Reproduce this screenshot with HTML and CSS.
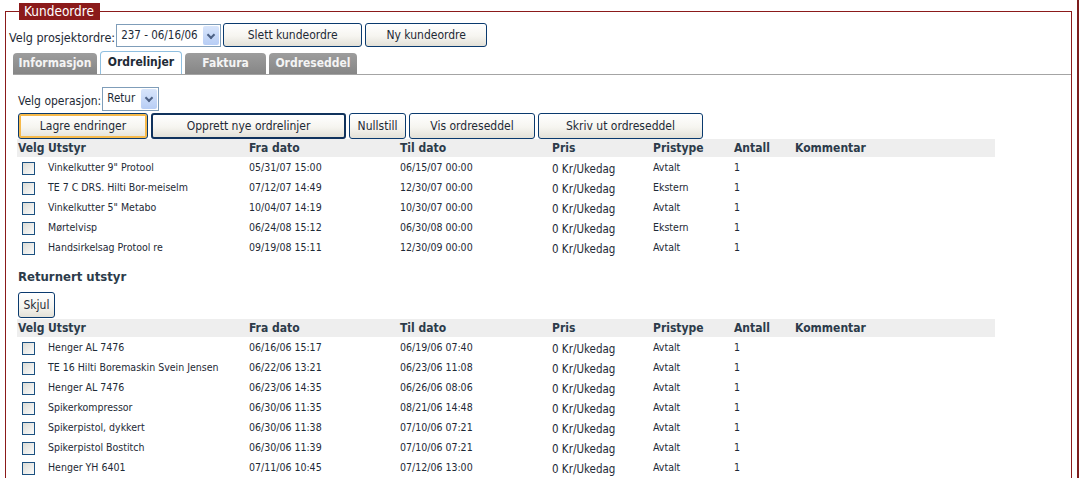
FILE: index.html
```html
<!DOCTYPE html>
<html lang="no">
  <head>
    <meta charset="UTF-8" />
    <title>Kundeordre</title>
    <link rel="stylesheet" href="styles.css">
  </head>
  <body>
    <div class="page">
      <fieldset class="box">
        <legend class="box-title">Kundeordre</legend>

        <div class="bar top-bar">
          <span class="label lbl-order">Velg prosjektordre:</span>
          <span class="select sel-order"><span class="sel-text">237 - 06/16/06</span><span class="sel-arrow"></span></span>
          <button class="btn w-slett">Slett kundeordre</button>
          <button class="btn w-ny">Ny kundeordre</button>
        </div>

        <div class="tabs">
          <div class="tab t-info">Informasjon</div>
          <div class="tab active t-ordre">Ordrelinjer</div>
          <div class="tab t-faktura">Faktura</div>
          <div class="tab t-seddel">Ordreseddel</div>
        </div>

        <div class="panel">
          <div class="bar op-bar">
            <span class="label">Velg operasjon:</span>
            <span class="select sel-op"><span class="sel-text">Retur</span><span class="sel-arrow"></span></span>
          </div>
          <div class="bar btn-bar">
            <button class="btn hover w-lagre">Lagre endringer</button>
            <button class="btn default w-opprett">Opprett nye ordrelinjer</button>
            <button class="btn w-null">Nullstill</button>
            <button class="btn w-vis">Vis ordreseddel</button>
            <button class="btn w-skriv">Skriv ut ordreseddel</button>
          </div>

          <table class="grid">
            <thead>
              <tr>
                <th class="c-velg">Velg</th><th class="c-utstyr">Utstyr</th><th class="c-fra">Fra dato</th><th class="c-til">Til dato</th><th class="c-pris">Pris</th><th class="c-type">Pristype</th><th class="c-antall">Antall</th><th>Kommentar</th>
              </tr>
            </thead>
            <tbody>
              <tr><td><span class="check"></span></td><td>Vinkelkutter 9" Protool</td><td>05/31/07 15:00</td><td>06/15/07 00:00</td><td class="pris">0 Kr/Ukedag</td><td>Avtalt</td><td>1</td><td></td></tr>
              <tr><td><span class="check"></span></td><td>TE 7 C DRS. Hilti Bor-meiselm</td><td>07/12/07 14:49</td><td>12/30/07 00:00</td><td class="pris">0 Kr/Ukedag</td><td>Ekstern</td><td>1</td><td></td></tr>
              <tr><td><span class="check"></span></td><td>Vinkelkutter 5" Metabo</td><td>10/04/07 14:19</td><td>10/30/07 00:00</td><td class="pris">0 Kr/Ukedag</td><td>Avtalt</td><td>1</td><td></td></tr>
              <tr><td><span class="check"></span></td><td>Mørtelvisp</td><td>06/24/08 15:12</td><td>06/30/08 00:00</td><td class="pris">0 Kr/Ukedag</td><td>Ekstern</td><td>1</td><td></td></tr>
              <tr><td><span class="check"></span></td><td>Handsirkelsag Protool re</td><td>09/19/08 15:11</td><td>12/30/09 00:00</td><td class="pris">0 Kr/Ukedag</td><td>Avtalt</td><td>1</td><td></td></tr>
            </tbody>
          </table>

          <h3 class="sub-title">Returnert utstyr</h3>
          <button class="btn w-skjul">Skjul</button>

          <table class="grid">
            <thead>
              <tr>
                <th class="c-velg">Velg</th><th class="c-utstyr">Utstyr</th><th class="c-fra">Fra dato</th><th class="c-til">Til dato</th><th class="c-pris">Pris</th><th class="c-type">Pristype</th><th class="c-antall">Antall</th><th>Kommentar</th>
              </tr>
            </thead>
            <tbody>
              <tr><td><span class="check"></span></td><td>Henger AL 7476</td><td>06/16/06 15:17</td><td>06/19/06 07:40</td><td class="pris">0 Kr/Ukedag</td><td>Avtalt</td><td>1</td><td></td></tr>
              <tr><td><span class="check"></span></td><td>TE 16 Hilti Boremaskin Svein Jensen</td><td>06/22/06 13:21</td><td>06/23/06 11:08</td><td class="pris">0 Kr/Ukedag</td><td>Avtalt</td><td>1</td><td></td></tr>
              <tr><td><span class="check"></span></td><td>Henger AL 7476</td><td>06/23/06 14:35</td><td>06/26/06 08:06</td><td class="pris">0 Kr/Ukedag</td><td>Avtalt</td><td>1</td><td></td></tr>
              <tr><td><span class="check"></span></td><td>Spikerkompressor</td><td>06/30/06 11:35</td><td>08/21/06 14:48</td><td class="pris">0 Kr/Ukedag</td><td>Avtalt</td><td>1</td><td></td></tr>
              <tr><td><span class="check"></span></td><td>Spikerpistol, dykkert</td><td>06/30/06 11:38</td><td>07/10/06 07:21</td><td class="pris">0 Kr/Ukedag</td><td>Avtalt</td><td>1</td><td></td></tr>
              <tr><td><span class="check"></span></td><td>Spikerpistol Bostitch</td><td>06/30/06 11:39</td><td>07/10/06 07:21</td><td class="pris">0 Kr/Ukedag</td><td>Avtalt</td><td>1</td><td></td></tr>
              <tr><td><span class="check"></span></td><td>Henger YH 6401</td><td>07/11/06 10:45</td><td>07/12/06 13:00</td><td class="pris">0 Kr/Ukedag</td><td>Avtalt</td><td>1</td><td></td></tr>
            </tbody>
          </table>
        </div>
      </fieldset>
    </div>
  </body>
</html>
```

FILE: styles.css
```css
* {
  margin: 0;
  padding: 0;
  box-sizing: border-box;
}
body {
  font-family: "DejaVu Sans Condensed", "DejaVu Sans", sans-serif;
  font-size: 11.5px;
  color: #1e2a36;
  background: #fff;
  overflow: hidden;
}
.page {
  width: 1079px;
  height: 478px;
  padding: 3px 5px 0 5px;
  border-right: 2px solid #7d1d1d;
  overflow: hidden;
}
.box {
  width: 1066px;
  border: 1px solid #8b1a1a;
  padding: 0 0 0 3px;
  height: 520px;
}
.box-title {
  margin-left: 10px;
  background: #8b1a1a;
  color: #fff;
  font-size: 13.5px;
  line-height: 17px;
  padding: 0 6px 0 5px;
}

/* toolbars */
.bar {
  display: flex;
  align-items: flex-end;
}
.top-bar {
  margin-top: 1px;
  height: 26px;
}
.label {
  font-size: 12px;
  padding-bottom: 2px;
  white-space: nowrap;
}
.lbl-order {
  font-size: 12.5px;
}
.select {
  display: flex;
  align-items: stretch;
  border: 1px solid #7f9db9;
  background: #fff;
  height: 23px;
  padding: 1px;
}
.sel-text {
  flex: 1;
  font-size: 11.5px;
  line-height: 19px;
  padding: 0 2px 0 3px;
  white-space: nowrap;
  overflow: hidden;
}
.sel-arrow {
  flex: none;
  width: 16px;
  border-radius: 2px;
  background: linear-gradient(#d8e5fb, #b7cdf5);
  position: relative;
}
.sel-arrow::after {
  content: "";
  position: absolute;
  left: 5px;
  top: 6px;
  width: 4px;
  height: 4px;
  border-right: 2px solid #4d6185;
  border-bottom: 2px solid #4d6185;
  transform: rotate(45deg);
}
.sel-order {
  margin-left: 1px;
  width: 105px;
}
.sel-op {
  width: 57px;
  height: 24px;
  margin-left: 1px;
}

.btn {
  font-family: inherit;
  font-size: 12px;
  color: #1e2a36;
  height: 26px;
  border: 1px solid #0a3a6e;
  border-radius: 3px;
  background: linear-gradient(#ffffff 0%, #f6f5f0 55%, #e3e1d8 100%);
  margin-right: 3px;
  white-space: nowrap;
}
.btn.hover {
  box-shadow: inset 0 0 0 2px #f6b94a;
}
.btn.default {
  border: 2px solid #10325c;
}
.w-slett { width: 139px; margin-left: 2px; height: 24px; }
.w-ny { width: 122px; height: 24px; }
.w-lagre { width: 130px; }
.w-opprett { width: 195px; }
.w-null { width: 57px; }
.w-vis { width: 126px; }
.w-skriv { width: 165px; }
.w-skjul {
  display: block;
  width: 37px;
  margin-top: 7px;
  margin-bottom: 1px;
}

/* tabs */
.tabs {
  display: flex;
  align-items: flex-end;
  margin-top: 5px;
  margin-left: 4px;
  width: 1058px;
  height: 23px;
  border-bottom: 1px solid #a4a4a4;
}
.tab {
  height: 21px;
  line-height: 20px;
  margin-right: 3px;
  text-align: center;
  font-size: 12px;
  font-weight: bold;
  color: #f4f4f4;
  background: linear-gradient(#9d9d9d, #868686);
  border-radius: 4px 4px 0 0;
}
.tab.active {
  height: 23px;
  line-height: 21px;
  color: #1e2a36;
  background: #fff;
  border: 1px solid #8fbfe0;
  border-bottom: none;
}
.t-info { width: 84px; }
.t-ordre { width: 82px; }
.t-faktura { width: 81px; }
.t-seddel { width: 88px; }

.panel {
  padding-left: 9px;
}
.op-bar {
  margin-top: 12px;
  height: 24px;
}
.op-bar .label {
  padding-bottom: 3px;
}
.btn-bar {
  margin-top: 2px;
}

/* tables */
.grid {
  width: 978px;
  border-collapse: collapse;
  table-layout: fixed;
  margin-left: -1px;
}
.grid th {
  background: #eeeeee;
  text-align: left;
  font-size: 12px;
  font-weight: bold;
  color: #2c3b4a;
  height: 18px;
  line-height: 18px;
  padding: 0 0 0 1px;
  white-space: nowrap;
}
.grid td {
  height: 20px;
  padding: 0 0 0 1px;
  font-size: 10.5px;
  white-space: nowrap;
  overflow: hidden;
}
.grid td.pris {
  font-size: 11.5px;
  padding-top: 3px;
}
.c-velg { width: 30px; }
.c-utstyr { width: 201px; }
.c-fra { width: 151px; }
.c-til { width: 152px; }
.c-pris { width: 101px; }
.c-type { width: 81px; }
.c-antall { width: 61px; }
.check {
  display: block;
  width: 13px;
  height: 13px;
  margin: 3px 0 0 4px;
  border: 1px solid #1c5180;
  background: linear-gradient(135deg, #dcdcd6, #fbfbfa);
}
.sub-title {
  font-size: 13px;
  font-weight: bold;
  color: #2c3b4a;
  line-height: 16px;
  margin-top: 12px;
}
```
